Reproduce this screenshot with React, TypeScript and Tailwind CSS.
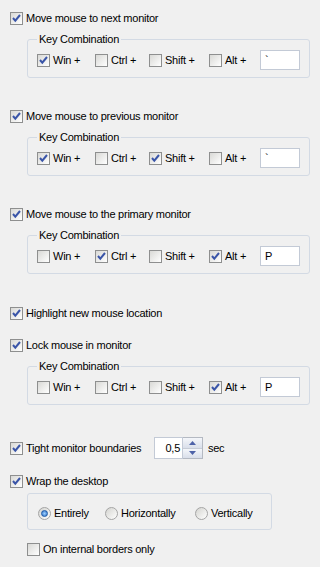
import React from "react";

// Small XP-style controls drawn with spans + svg
const Check = ({ checked }: { checked?: boolean }) => (
  <span className="flex h-[13px] w-[13px] shrink-0 items-center justify-center border border-[#8e8f8f] bg-linear-to-br from-[#d9d9d6] to-white">
    {checked && (
      <svg width="11" height="11" viewBox="0 0 11 11">
        <path d="M2 5 L4.3 7.6 L9 2" fill="none" stroke="#3a55a8" strokeWidth="2" />
      </svg>
    )}
  </span>
);

const Radio = ({ selected }: { selected?: boolean }) => (
  <span className="flex h-[13px] w-[13px] shrink-0 items-center justify-center rounded-full border border-[#a4a4a4] bg-linear-to-br from-[#d4d4d0] to-white">
    {selected && (
      <span className="h-[7px] w-[7px] rounded-full border border-[#1e5aa8] bg-radial from-[#9cd0ff] to-[#2d6fc4]" />
    )}
  </span>
);

const CheckRow = ({ checked, label, className = "" }: { checked?: boolean; label: string; className?: string }) => (
  <div className={`flex h-[13px] items-center gap-[3px] ${className}`}>
    <Check checked={checked} />
    <span className="leading-[13px]">{label}</span>
  </div>
);

type Keys = { win?: boolean; ctrl?: boolean; shift?: boolean; alt?: boolean; keyVal: string };

const KeyGroup = ({ win, ctrl, shift, alt, keyVal, className = "" }: Keys & { className?: string }) => (
  <fieldset className={`ml-[17px] w-[283px] rounded-[3px] border border-[#d3dae4] px-[9px] pt-[4px] pb-[7px] ${className}`}>
    <legend className="px-[2px] leading-[13px]">Key Combination</legend>
    <div className="flex h-[20px] items-center">
      <div className="flex w-[58px] items-center gap-[3px]"><Check checked={win} /><span>Win +</span></div>
      <div className="flex w-[54px] items-center gap-[3px]"><Check checked={ctrl} /><span>Ctrl +</span></div>
      <div className="flex w-[60px] items-center gap-[3px]"><Check checked={shift} /><span>Shift +</span></div>
      <div className="flex w-[51px] items-center gap-[3px]"><Check checked={alt} /><span>Alt +</span></div>
      <div className="h-[20px] w-[40px] border border-[#c3cad6] bg-white pl-[4px] leading-[18px]">{keyVal}</div>
    </div>
  </fieldset>
);

export default function App() {
  return (
    <div className="h-[567px] w-[320px] bg-[#f0f0f0] pl-[10px] pt-[12px] text-[11px] tracking-[-0.25px] text-black font-['Liberation_Sans',Arial,sans-serif]">
      <CheckRow checked label="Move mouse to next monitor" />
      <KeyGroup className="mt-[8px]" win keyVal="`" />

      <CheckRow checked label="Move mouse to previous monitor" className="mt-[32px]" />
      <KeyGroup className="mt-[8px]" win shift keyVal="`" />

      <CheckRow checked label="Move mouse to the primary monitor" className="mt-[32px]" />
      <KeyGroup className="mt-[8px]" ctrl alt keyVal="P" />

      <CheckRow checked label="Highlight new mouse location" className="mt-[33px]" />

      <CheckRow checked label="Lock mouse in monitor" className="mt-[19px]" />
      <KeyGroup className="mt-[8px]" alt keyVal="P" />

      {/* tight boundaries + spinner */}
      <div className="mt-[32px] flex h-[22px] items-center gap-[3px]">
        <Check checked />
        <span className="w-[125px]">Tight monitor boundaries</span>
        <div className="flex h-[22px] items-stretch">
          <div className="w-[29px] border border-[#c3cad6] bg-white pr-[2px] text-right leading-[20px]">0,5</div>
          <div className="flex w-[20px] flex-col border border-l-0 border-[#b4b9c2]">
            <div className="flex flex-1 items-center justify-center border-b border-[#c6ccd6] bg-linear-to-b from-[#f4f6fa] to-[#d9dfea]">
              <svg width="7" height="4" viewBox="0 0 7 4"><path d="M0 4 L3.5 0 L7 4 Z" fill="#4d62a8" /></svg>
            </div>
            <div className="flex flex-1 items-center justify-center bg-linear-to-b from-[#f4f6fa] to-[#d9dfea]">
              <svg width="7" height="4" viewBox="0 0 7 4"><path d="M0 0 L7 0 L3.5 4 Z" fill="#4d62a8" /></svg>
            </div>
          </div>
        </div>
        <span className="ml-[2px]">sec</span>
      </div>

      <CheckRow checked label="Wrap the desktop" className="mt-[16px]" />
      <div className="ml-[17px] mt-[5px] w-[245px] rounded-[3px] border border-[#d3dae4] pl-[10px] pt-[13px] pb-[9px]">
        <div className="flex h-[13px] items-center">
          <div className="flex w-[67px] items-center gap-[3px]"><Radio selected /><span>Entirely</span></div>
          <div className="flex w-[90px] items-center gap-[3px]"><Radio /><span>Horizontally</span></div>
          <div className="flex items-center gap-[3px]"><Radio /><span>Vertically</span></div>
        </div>
      </div>

      <CheckRow label="On internal borders only" className="ml-[17px] mt-[13px]" />
    </div>
  );
}
